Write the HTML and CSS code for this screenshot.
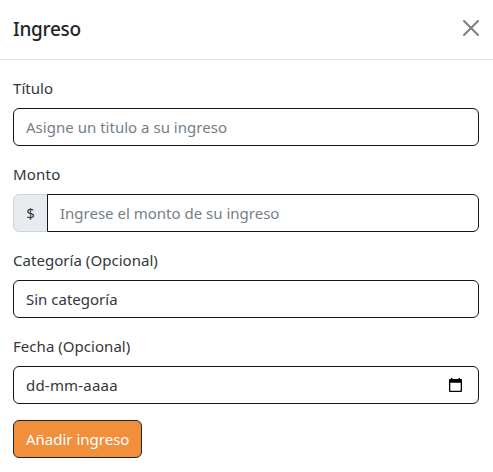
FILE: index.html
```html
<!DOCTYPE html>
<html lang="es">
<head>
<meta charset="utf-8">
<title>Ingreso</title>
<link rel="stylesheet" href="styles.css">
</head>
<body>
<header class="modal-header">
  <h5 class="modal-title">Ingreso</h5>
  <button class="close" type="button" aria-label="Cerrar">
    <svg width="16" height="16" viewBox="0 0 16 16"><path d="M.293.293a1 1 0 0 1 1.414 0L8 6.586 14.293.293a1 1 0 1 1 1.414 1.414L9.414 8l6.293 6.293a1 1 0 0 1-1.414 1.414L8 9.414l-6.293 6.293a1 1 0 0 1-1.414-1.414L6.586 8 .293 1.707a1 1 0 0 1 0-1.414z"/></svg>
  </button>
</header>
<form class="modal-body">
  <div class="field">
    <label class="label">Título</label>
    <div class="control placeholder">Asigne un titulo a su ingreso</div>
  </div>
  <div class="field">
    <label class="label wide">Monto</label>
    <div class="group">
      <span class="addon">$</span>
      <div class="control placeholder joined">Ingrese el monto de su ingreso</div>
    </div>
  </div>
  <div class="field">
    <label class="label">Categoría (Opcional)</label>
    <div class="control">Sin categoría</div>
  </div>
  <div class="field">
    <label class="label">Fecha (Opcional)</label>
    <div class="control date">
      <span class="wide">dd-mm-aaaa</span>
      <svg class="calendar" width="13" height="14" viewBox="0 0 13 14"><path fill-rule="evenodd" d="M2 0h1.300v1h6.400V0H11v1h1q1 0 1 1V13q0 1-1 1H1q-1 0-1-1V2q0-1 1-1h1zM1.300 4.700v8h10.400v-8z"/></svg>
    </div>
  </div>
  <button class="submit" type="button">Añadir ingreso</button>
</form>
</body>
</html>
```
FILE: styles.css
```css
* { box-sizing: border-box; }
body {
  margin: 0;
  background: #fff;
  color: #33373b;
  font: 400 15px/24px "Noto Sans", "Open Sans", sans-serif;
  overflow: hidden;
}
.modal-header {
  display: flex;
  align-items: center;
  justify-content: space-between;
  height: 60px;
  padding: 0 14px 2px 13px;
  border-bottom: 1px solid #dee2e6;
}
.modal-title {
  margin: 0;
  color: #212529;
  font-size: 19px;
  font-weight: 500;
  letter-spacing: -.3px;
  line-height: 30px;
}
.close {
  display: flex;
  margin-top: -1px;
  padding: 0;
  border: 0;
  background: none;
  opacity: .5;
}
.modal-body { padding: 16px 14px 0 13px; }
.field { margin-bottom: 16px; }
.label {
  display: block;
  height: 24px;
  margin-bottom: 8px;
  letter-spacing: .04px;
}
.wide { letter-spacing: .2px; }
.control {
  display: flex;
  align-items: center;
  height: 38px;
  padding: 0 12px;
  border: 1px solid #141619;
  border-radius: 6px;
  white-space: nowrap;
}
.placeholder {
  color: #757e87;
  letter-spacing: .02px;
}
.group { display: flex; }
.addon {
  display: flex;
  align-items: center;
  justify-content: center;
  width: 35px;
  margin-right: -1px;
  border: 1px solid #ced4da;
  border-radius: 6px 0 0 6px;
  background: #e9ecef;
}
.joined {
  flex: 1;
  border-radius: 0 6px 6px 0;
  letter-spacing: 0;
}
.date {
  justify-content: space-between;
  padding-right: 16px;
}
.submit {
  display: flex;
  align-items: center;
  width: 129px;
  height: 38px;
  padding: 0 12px;
  border: 1px solid #212529;
  border-radius: 6px;
  background: #f18f3d;
  color: #fff;
  font: inherit;
  white-space: nowrap;
}
```
